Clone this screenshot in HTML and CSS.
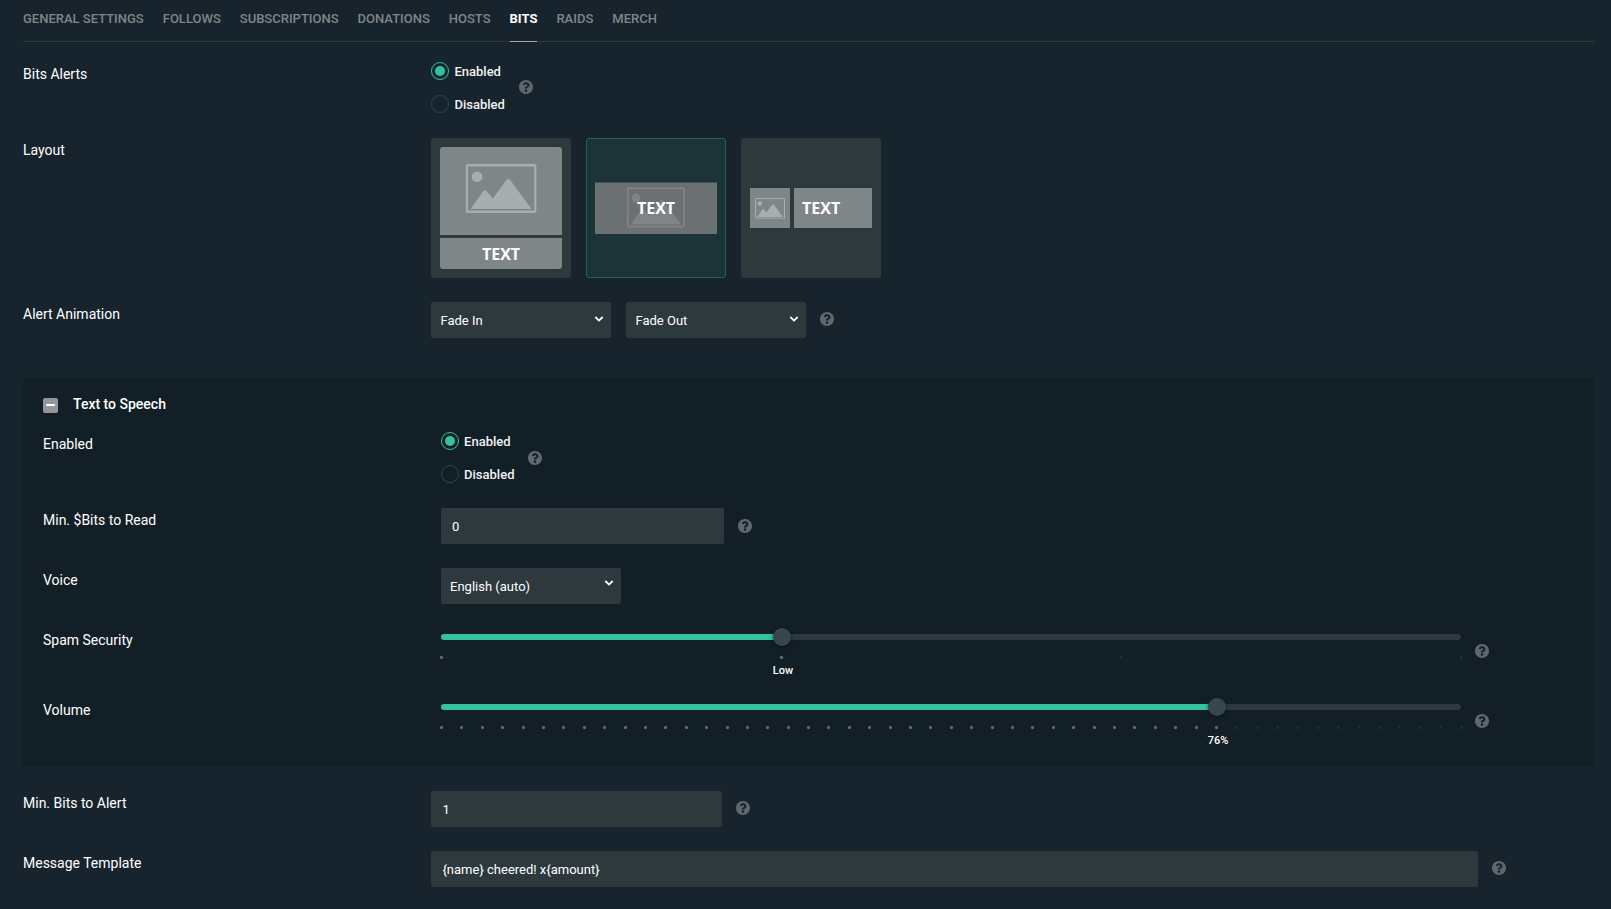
FILE: index.html
```html
<!DOCTYPE html>
<html lang="en">
<head>
<meta charset="utf-8">
<meta name="viewport" content="width=device-width, initial-scale=1">
<title>Alert Box - Bits</title>
<link rel="stylesheet" href="styles.css">
</head>
<body>
<svg class="defs" aria-hidden="true">
  <symbol id="help" viewBox="8 8 496 496">
    <path d="M504 256c0 136.997-111.043 248-248 248S8 392.997 8 256C8 119.083 119.043 8 256 8s248 111.083 248 248zM262.655 90c-54.497 0-89.255 22.957-116.549 63.758-3.536 5.286-2.353 12.415 2.715 16.258l34.699 26.31c5.205 3.947 12.621 3.008 16.665-2.122 17.864-22.658 30.113-35.797 57.303-35.797 20.429 0 45.698 13.148 45.698 32.958 0 14.976-12.363 22.667-32.534 33.976C247.128 238.528 216 254.941 216 296v4c0 6.627 5.373 12 12 12h56c6.627 0 12-5.373 12-12v-1.333c0-28.462 83.186-29.647 83.186-106.667 0-58.002-60.165-102-116.531-102zM256 338c-25.365 0-46 20.635-46 46 0 25.364 20.635 46 46 46s46-20.636 46-46c0-25.364-20.635-46-46-46z"/>
  </symbol>
  <symbol id="photo" viewBox="0 0 71 49">
    <rect x="1.2" y="1.2" width="68.6" height="46.6" rx="1" fill="none" stroke="currentColor" stroke-width="2.4"/>
    <circle cx="11.5" cy="12.8" r="5.3" fill="currentColor"/>
    <path d="M5 45 L17.5 27.6 Q19.5 25 21.5 27.6 L27.3 34.5 L40.6 16.2 Q42.6 13.6 44.8 16.2 L66 45 Z" fill="currentColor"/>
  </symbol>
</svg>
<nav class="tabs">
  <a class="tab" href="#general">GENERAL SETTINGS</a>
  <a class="tab" href="#follows">FOLLOWS</a>
  <a class="tab" href="#subscriptions">SUBSCRIPTIONS</a>
  <a class="tab" href="#donations">DONATIONS</a>
  <a class="tab" href="#hosts">HOSTS</a>
  <a class="tab tab-active" href="#bits" aria-current="page">BITS</a>
  <a class="tab" href="#raids">RAIDS</a>
  <a class="tab" href="#merch">MERCH</a>
</nav>
<main class="settings">
  <div class="row" role="radiogroup" aria-labelledby="alerts-label">
    <span class="label" id="alerts-label">Bits Alerts</span>
    <div class="control">
      <div class="radios">
        <label class="radio"><input type="radio" name="alerts" checked>Enabled</label>
        <label class="radio"><input type="radio" name="alerts">Disabled</label>
      </div>
      <svg class="help"><use href="#help"/></svg>
    </div>
  </div>

  <div class="row" role="group" aria-labelledby="layout-label">
    <span class="label" id="layout-label">Layout</span>
    <div class="cards">
      <button class="card" type="button" aria-pressed="false" aria-label="Text below image">
        <svg class="preview" viewBox="0 0 122 122">
          <path class="block" d="M0 88V3Q0 0 3 0H119Q122 0 122 3V88Z"/>
          <path class="block" d="M0 91H122V119Q122 122 119 122H3Q0 122 0 119Z"/>
          <use class="photo" href="#photo" x="25.6" y="17" width="71" height="49"/>
          <text class="caption" x="61" y="113" text-anchor="middle">TEXT</text>
        </svg>
      </button>
      <button class="card card-selected" type="button" aria-pressed="true" aria-label="Text over image">
        <svg class="preview" viewBox="0 0 122 122">
          <rect class="block-dim" y="35.5" width="122" height="51.5"/>
          <use class="photo-dim" href="#photo" x="31.7" y="40.2" width="58.4" height="40.6"/>
          <text class="caption" x="61" y="67" text-anchor="middle">TEXT</text>
        </svg>
      </button>
      <button class="card" type="button" aria-pressed="false" aria-label="Text beside image">
        <svg class="preview" viewBox="0 0 122 122">
          <rect class="block" y="41" width="40" height="40"/>
          <rect class="block" x="44" y="41" width="78" height="40"/>
          <use class="photo" href="#photo" x="5" y="51" width="30" height="20.7"/>
          <text class="caption" x="52" y="67">TEXT</text>
        </svg>
      </button>
    </div>
  </div>

  <div class="row">
    <label class="label" for="anim-in">Alert Animation</label>
    <div class="control">
      <div class="selects">
        <select class="field select" id="anim-in"><option>Fade In</option></select>
        <select class="field select" aria-label="Exit animation"><option>Fade Out</option></select>
      </div>
      <svg class="help"><use href="#help"/></svg>
    </div>
  </div>

  <section class="panel">
    <h2 class="panel-title">
      <button class="collapse" type="button" aria-label="Collapse">
        <svg viewBox="0 0 15 15"><rect x="3" y="6" width="9" height="2" rx="1" fill="#fff"/></svg>
      </button>
      Text to Speech
    </h2>
    <div class="row" role="radiogroup" aria-labelledby="tts-label">
      <span class="label" id="tts-label">Enabled</span>
      <div class="control">
        <div class="radios">
          <label class="radio"><input type="radio" name="tts" checked>Enabled</label>
          <label class="radio"><input type="radio" name="tts">Disabled</label>
        </div>
        <svg class="help"><use href="#help"/></svg>
      </div>
    </div>
    <div class="row">
      <label class="label" for="min-read">Min. $Bits to Read</label>
      <div class="control">
        <input class="field input-short" id="min-read" type="text" value="0">
        <svg class="help"><use href="#help"/></svg>
      </div>
    </div>
    <div class="row">
      <label class="label" for="voice">Voice</label>
      <div class="control">
        <select class="field select" id="voice"><option>English (auto)</option></select>
      </div>
    </div>
    <div class="row">
      <label class="label" for="spam">Spam Security</label>
      <div class="control">
        <div class="slider" data-names="Off,Low,Medium,High">
          <div class="track"><div class="fill"></div></div>
          <input class="range" id="spam" type="range" min="0" max="3" step="1" value="1">
          <div class="ticks"></div>
          <output class="value" for="spam">Low</output>
        </div>
        <svg class="help"><use href="#help"/></svg>
      </div>
    </div>
    <div class="row">
      <label class="label" for="volume">Volume</label>
      <div class="control">
        <div class="slider">
          <div class="track"><div class="fill"></div></div>
          <input class="range" id="volume" type="range" min="0" max="100" step="2" value="76">
          <div class="ticks"></div>
          <output class="value" for="volume">76%</output>
        </div>
        <svg class="help"><use href="#help"/></svg>
      </div>
    </div>
  </section>

  <div class="row">
    <label class="label" for="min-alert">Min. Bits to Alert</label>
    <div class="control">
      <input class="field input-short" id="min-alert" type="text" value="1">
      <svg class="help"><use href="#help"/></svg>
    </div>
  </div>
  <div class="row">
    <label class="label" for="template">Message Template</label>
    <div class="control">
      <input class="field input-long" id="template" type="text" value="{name} cheered! x{amount}">
      <svg class="help"><use href="#help"/></svg>
    </div>
  </div>
</main>
<script src="script.js"></script>
</body>
</html>
```

FILE: styles.css
```css
* {
  box-sizing: border-box;
}

body {
  margin: 0;
  padding: 0 17px 0 23px;
  background: #17242d;
  color: #fff;
  font: 14px/20px Roboto, "Liberation Sans", sans-serif;
}

.defs {
  position: absolute;
  width: 0;
  height: 0;
}

.tabs {
  display: flex;
  gap: 19px;
  border-bottom: 1px solid #2b383f;
  margin-bottom: 20px;
}

.tab {
  padding: 9px 0 12px;
  margin-bottom: -1px;
  border-bottom: 1px solid transparent;
  color: #7f8688;
  font-size: 13px;
  font-weight: 500;
  text-decoration: none;
}

.tab-active {
  color: #fff;
  font-weight: 700;
  border-bottom-color: #a3a8aa;
}

.row {
  display: grid;
  grid-template-columns: 26% 1fr;
  margin-bottom: 24px;
}

.label {
  padding-top: 2px;
}

.control {
  display: flex;
  align-items: center;
  gap: 14px;
}

.help {
  flex: none;
  width: 14px;
  height: 14px;
  fill: #5f686d;
}

.settings > .row .help {
  margin-bottom: 2px;
}

.radios {
  display: flex;
  flex-direction: column;
  gap: 13px;
  margin-bottom: -1px;
}

.radio {
  display: flex;
  align-items: flex-start;
  gap: 5px;
  color: #f1f2f2;
  font-size: 13px;
  line-height: 20px;
  font-weight: 500;
}

.radio input {
  appearance: none;
  width: 18px;
  height: 18px;
  margin: 0;
  border: 1px solid #1f4f4d;
  border-radius: 50%;
}

.radio input:checked {
  border-color: #31c3a2;
  background: #31c3a2 content-box;
  padding: 3px;
}

.cards {
  display: flex;
  gap: 15px;
}

.card {
  width: 140px;
  height: 140px;
  padding: 8px;
  border: 1px solid #2e393e;
  border-radius: 3px;
  background: #2e393e;
}

.card-selected {
  border-color: #1f6459;
  background: #1c3338;
}

.preview {
  display: block;
  width: 100%;
}

.block {
  fill: #7f8688;
}

.block-dim {
  fill: #6b7072;
}

.photo {
  color: #a8adaf;
}

.photo-dim {
  color: #808486;
}

.caption {
  fill: #fff;
  font: 700 16px "Open Sans", sans-serif;
}

.selects {
  display: flex;
  gap: 15px;
}

.field {
  height: 36px;
  border: 0;
  border-radius: 2px;
  background-color: #2e393e;
  color: #fff;
  font: 13px/20px Roboto, "Liberation Sans", sans-serif;
  padding: 1px 11px 0;
}

.select {
  appearance: none;
  width: 180px;
  padding: 1px 24px 0 9px;
  background-image: url("data:image/svg+xml,%3Csvg xmlns='http://www.w3.org/2000/svg' width='10' height='6'%3E%3Cpath d='M1.3 1 L5 4.6 L8.7 1' fill='none' stroke='%23fff' stroke-width='1.8'/%3E%3C/svg%3E");
  background-repeat: no-repeat;
  background-position: right 7px top 14px;
}

.panel .select {
  background-position: right 7px top 12px;
}

.input-short {
  width: 25%;
}

.input-long {
  width: 90%;
}

.panel {
  margin: 40px 0 24px;
  padding: 20px 20px 23px;
  border-radius: 3px;
  background: #131f27;
}

.panel .row:last-child {
  margin-bottom: 0;
}

.panel-title {
  display: flex;
  align-items: flex-start;
  gap: 15px;
  height: 15px;
  margin: 0 0 19px;
  font-size: 14px;
  line-height: 13px;
  font-weight: 500;
}

.collapse {
  width: 15px;
  height: 15px;
  padding: 0;
  border: 0;
  border-radius: 2px;
  background: #91979a;
}

.collapse svg {
  display: block;
}

.slider {
  position: relative;
  width: 90%;
  height: 46px;
  padding-top: 6px;
}

.track {
  height: 6px;
  border-radius: 3px;
  background: #2e393e;
}

.fill {
  width: var(--percent);
  height: 6px;
  border-radius: 3px;
  background: #31c3a2;
}

.range {
  appearance: none;
  position: absolute;
  top: 0;
  left: -8px;
  width: calc(100% + 18px);
  height: 18px;
  margin: 0;
  background: transparent;
}

.range::-webkit-slider-thumb {
  appearance: none;
  width: 18px;
  height: 18px;
  border-radius: 50%;
  background: #37474f;
  box-shadow: 0 1px 4px rgba(0, 0, 0, 0.5);
}

.ticks {
  display: flex;
  justify-content: space-between;
  margin: 16px -2px 0 -1px;
}

.tick {
  width: 3px;
  height: 3px;
  border-radius: 1px;
  background: #212d34;
}

.tick-on {
  background: #5f686d;
}

.value {
  position: absolute;
  top: 36px;
  left: calc(var(--percent) + 2px);
  transform: translateX(-50%);
  font-size: 11px;
  line-height: 14px;
  font-weight: 500;
}
```

FILE: script.js
```js
document.querySelectorAll(".slider").forEach(function (slider) {
  var input = slider.querySelector(".range");
  var ticks = slider.querySelector(".ticks");
  var output = slider.querySelector(".value");
  var names = slider.dataset.names ? slider.dataset.names.split(",") : null;
  var steps = input.max / input.step;

  for (var i = 0; i <= steps; i++) {
    var tick = document.createElement("span");
    tick.className = "tick";
    ticks.appendChild(tick);
  }

  function update() {
    slider.style.setProperty("--percent", (input.value / input.max) * 100 + "%");
    output.textContent = names ? names[input.value] : input.value + "%";
    Array.from(ticks.children).forEach(function (tick, index) {
      tick.classList.toggle("tick-on", index * input.step <= Number(input.value));
    });
  }

  input.addEventListener("input", update);
  update();
});
```
